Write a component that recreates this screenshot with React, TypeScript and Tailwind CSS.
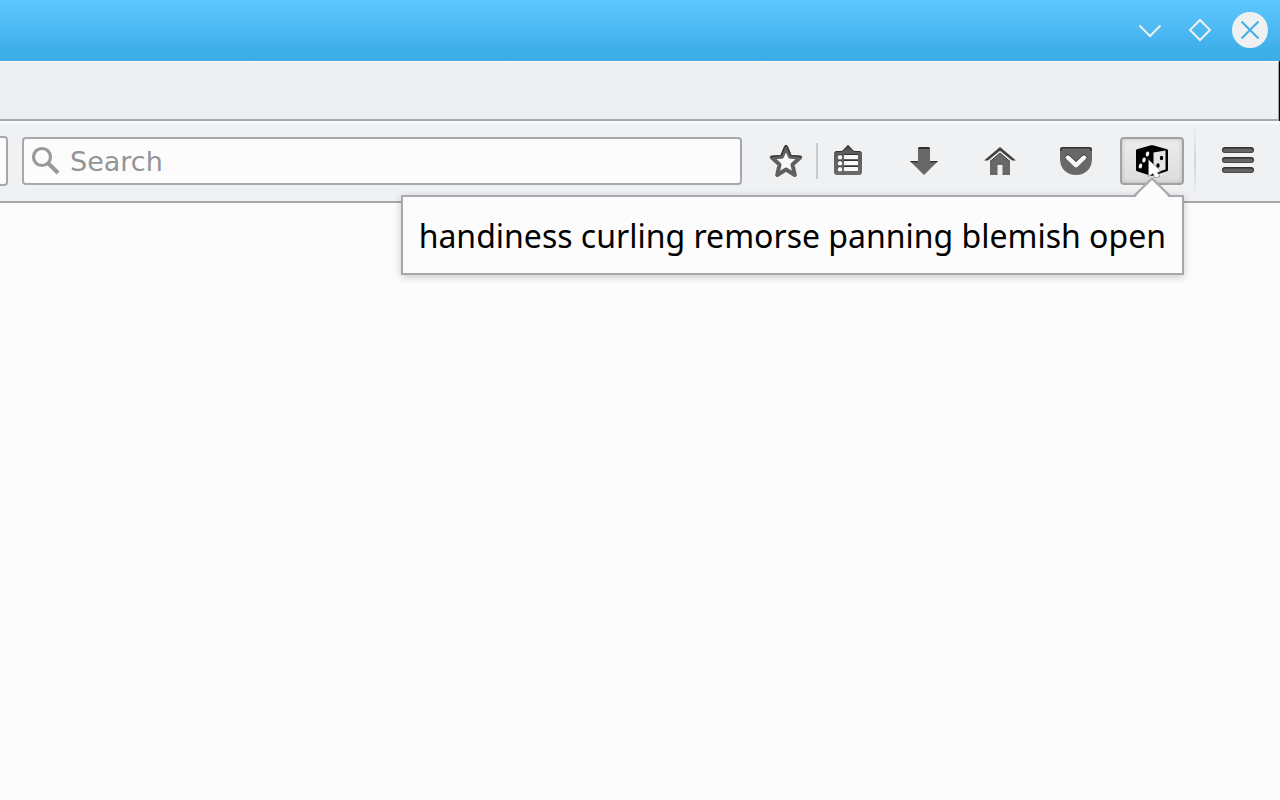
import type { ReactNode } from "react";

function IconButton({ label, className, children }: { label: string; className: string; children: ReactNode }) {
  return (
    <button type="button" aria-label={label} className={`flex h-12 shrink-0 items-center justify-center ${className}`}>
      {children}
    </button>
  );
}

function IconDefs() {
  return (
    <svg width="0" height="0" className="absolute" aria-hidden="true">
      <defs>
        <linearGradient id="metal" x1="0" y1="0" x2="0" y2="1">
          <stop offset="0" stopColor="#303030" />
          <stop offset="0.18" stopColor="#5c5c5c" />
          <stop offset="1" stopColor="#6a6a6a" />
        </linearGradient>
      </defs>
    </svg>
  );
}

function TitleBar() {
  return (
    <header className="flex h-[61px] items-center justify-end gap-[14px] bg-linear-to-b from-[#5ec7ff] to-[#3daee9] to-85% pr-3 pb-px">
      <IconButton label="Minimize" className="w-9">
        <svg width="36" height="36" viewBox="0 0 36 36" fill="none" stroke="#eff0f1" strokeWidth="2">
          <path d="M7.500 13.500 18 24 28.500 13.500" />
        </svg>
      </IconButton>
      <IconButton label="Maximize" className="w-9">
        <svg width="36" height="36" viewBox="0 0 36 36" fill="none" stroke="#eff0f1" strokeWidth="2">
          <path d="M18 8 28 18 18 28 8 18Z" />
        </svg>
      </IconButton>
      <IconButton label="Close" className="w-9">
        <svg width="36" height="36" viewBox="0 0 36 36" fill="none" stroke="#3daee9" strokeWidth="2">
          <circle cx="18" cy="18" r="18" fill="#eff0f1" stroke="none" />
          <path d="M9.500 9.500 26.500 26.500M26.500 9.500 9.500 26.500" />
        </svg>
      </IconButton>
    </header>
  );
}

function Tooltip() {
  return (
    <div
      role="tooltip"
      className="absolute top-[58px] right-0 h-20 border-2 border-[#a5a8ac] bg-[#fcfcfc] px-4 pt-px shadow-[0_2px_8px_rgba(0,0,0,0.2)]"
    >
      <svg width="40" height="22" viewBox="0 0 40 22" className="absolute -top-[21px] right-[10px]">
        <path d="M2.500 22 20 3.500 37.500 22Z" fill="#fcfcfc" />
        <path d="M1.500 20.500 20 2.500 38.500 20.500" fill="none" stroke="#a5a8ac" strokeWidth="2" />
      </svg>
      <p className="font-['Noto_Sans',sans-serif] text-[32px] leading-[76px] whitespace-nowrap text-black">
        handiness curling remorse panning blemish open
      </p>
    </div>
  );
}

function DiceIcon() {
  return (
    <svg width="32" height="34" viewBox="0 0 32 34">
      <path d="M0 6.500Q0 5.500 1 5.200L15 1.300Q16 1 17 1.300L31 5.200Q32 5.500 32 6.500V26Q32 27 31 27.300L17 31.700Q16 32 15 31.700L1 27.300Q0 27 0 26Z" fill="#000" />
      <path d="M17.500 8.500 29.500 6.500V25.500L17.500 29Z" fill="#e6e6e6" />
      <g fill="#f4f4f4">
        <ellipse cx="11.500" cy="10" rx="1.700" ry="2.500" transform="rotate(15 11.500 10)" />
        <ellipse cx="8" cy="16" rx="1.700" ry="2.500" transform="rotate(15 8 16)" />
        <ellipse cx="4.500" cy="22" rx="1.700" ry="2.500" transform="rotate(15 4.500 22)" />
      </g>
      <ellipse cx="25.500" cy="14" rx="1.700" ry="2.300" />
      <ellipse cx="22" cy="21.500" rx="1.700" ry="2.300" />
      <path d="M12.500 15.500V32.500L17 29.500 19 34 24 32.500 21.500 28.500 25 27.500Z" fill="#fff" stroke="#666" strokeWidth="0.600" />
    </svg>
  );
}

function Toolbar() {
  return (
    <nav className="relative flex h-[82px] items-center border-b-2 border-[#a5a8ac] bg-linear-to-b from-[#f8f9fa] from-3% via-[#f0f1f3] via-4% to-[#f0f1f3]">
      <div className="h-[50px] w-2 shrink-0 rounded-r-[4px] border-2 border-l-0 border-[#a5a8ac] bg-[#fcfcfc]" />
      <label className="ml-[14px] flex h-12 min-w-0 flex-1 items-center rounded-[4px] border-2 border-[#a5a8ac] bg-[#fcfcfc]">
        <svg width="30" height="30" viewBox="0 0 30 30" className="ml-[6px] shrink-0" fill="none" stroke="#999" aria-hidden="true">
          <circle cx="12" cy="11" r="8.500" strokeWidth="3.200" />
          <path d="M18 17 28 27" strokeWidth="4" />
        </svg>
        <input
          type="text"
          aria-label="Search"
          placeholder="Search"
          className="ml-[10px] h-full min-w-0 flex-1 bg-transparent font-['DejaVu_Sans',sans-serif] text-[27px] text-black outline-none placeholder:text-[#929497]"
        />
      </label>
      <IconButton label="Bookmark this page" className="ml-[14px] w-[60px]">
        <svg width="34" height="34" viewBox="0 0 34 34">
          <path d="M17 3.300 21 12.800 31.200 13.500 23.500 20.500 25.800 31 17 25.500 8.200 31 10.500 20.500 2.800 13.500 13 12.800Z" fill="#fafafa" stroke="#606060" strokeWidth="4" strokeLinejoin="round" />
          <path d="M15.500 3 17 1.300 18.500 3 22 11.500 32.500 12.700M15.500 3 12 11.500 1.500 12.700" fill="none" stroke="#303030" strokeWidth="1.200" strokeLinejoin="round" />
        </svg>
      </IconButton>
      <div className="h-9 w-[2px] shrink-0 bg-[#c8c9cb]" />
      <IconButton label="Show bookmarks" className="mr-2 w-[60px]">
        <svg width="28" height="32" viewBox="0 0 28 32">
          <path d="M3 6H8L14 0 20 6H25Q28 6 28 9V27Q28 30 25 30H3Q0 30 0 27V9Q0 6 3 6Z" fill="url(#metal)" />
          <path d="M1 7.500Q1.500 6.500 3 6.500H8.200L14 0.700 19.800 6.500H25Q26.500 6.500 27 7.500" fill="none" stroke="#303030" />
          <g fill="#303030">
            <circle cx="6" cy="11.500" r="2.300" />
            <circle cx="6" cy="17.500" r="2.300" />
            <circle cx="6" cy="23.500" r="2.300" />
            <path d="M10 9H24V11H10ZM10 15H24V17H10ZM10 21H24V23H10Z" />
          </g>
          <g fill="#f8f8f8">
            <circle cx="6" cy="12.200" r="2.200" />
            <circle cx="6" cy="18.200" r="2.200" />
            <circle cx="6" cy="24.200" r="2.200" />
            <rect x="10" y="10" width="14" height="4" rx="0.500" />
            <rect x="10" y="16" width="14" height="4" rx="0.500" />
            <rect x="10" y="22" width="14" height="4" rx="0.500" />
          </g>
        </svg>
      </IconButton>
      <IconButton label="Downloads" className="w-[76px]">
        <svg width="28" height="28" viewBox="0 0 28 28">
          <path d="M10 0H18Q20 0 20 2V14H28L14 28 0 14H8V2Q8 0 10 0Z" fill="#686868" />
          <path d="M8 2Q8 0 10 0H18Q20 0 20 2H8ZM0 14H8V15.500H1.500ZM20 14H28L26.500 15.500H20Z" fill="#303030" />
        </svg>
      </IconButton>
      <IconButton label="Home" className="w-[76px]">
        <svg width="32" height="28" viewBox="0 0 32 28">
          <path d="M16 0 32 13.500H28L16 3.700 4 13.500H0Z" fill="#444" />
          <path d="M16 6 26 14.500V28H18.500V18H13.500V28H6V14.500Z" fill="#686868" />
          <path d="M6 14.500 16 6 26 14.500" fill="none" stroke="#3c3c3c" />
        </svg>
      </IconButton>
      <IconButton label="Save to Pocket" className="w-[76px]">
        <svg width="32" height="28" viewBox="0 0 32 28">
          <path d="M3 0H29Q32 0 32 3V12C32 22 25 28 16 28S0 22 0 12V3Q0 0 3 0Z" fill="#686868" />
          <path d="M0.700 4V3Q0.700 0.700 3 0.700H29Q31.300 0.700 31.300 3V4" fill="none" stroke="#303030" strokeWidth="1.400" />
          <path d="M8 9.500 16 17.200 24 9.500" fill="none" stroke="#333" strokeWidth="4.400" strokeLinecap="round" strokeLinejoin="round" />
          <path d="M8 10.500 16 18.200 24 10.500" fill="none" stroke="#fafafa" strokeWidth="4.400" strokeLinecap="round" strokeLinejoin="round" />
        </svg>
      </IconButton>
      <div className="relative mr-[10px] ml-[6px] shrink-0">
        <IconButton
          label="Generate phrase"
          className="w-16 rounded-[4px] border-2 border-[#a2a2a2] bg-linear-to-b from-[#ececec] to-[#dcdcdc] shadow-[inset_0_0_4px_rgba(0,0,0,0.18)]"
        >
          <DiceIcon />
        </IconButton>
        <Tooltip />
      </div>
      <div className="h-[74px] w-[2px] shrink-0 bg-linear-to-b from-transparent via-[#d3d4d6] to-transparent" />
      <IconButton label="Open menu" className="w-[84px] pb-[2px]">
        <svg width="32" height="26" viewBox="0 0 32 26" fill="#656565">
          <g fill="#303030">
            <rect width="32" height="6" rx="3" />
            <rect y="10" width="32" height="6" rx="3" />
            <rect y="20" width="32" height="6" rx="3" />
          </g>
          <rect x="1" y="1.500" width="30" height="4" rx="2" />
          <rect x="1" y="11.500" width="30" height="4" rx="2" />
          <rect x="1" y="21.500" width="30" height="4" rx="2" />
        </svg>
      </IconButton>
    </nav>
  );
}

export default function App() {
  return (
    <div className="min-h-screen overflow-x-hidden bg-[#fcfcfc]">
      <IconDefs />
      <TitleBar />
      <div className="flex h-[60px] bg-black">
        <div className="flex-1 border-t border-r border-b-2 border-t-[#fcfcfc] border-r-[#a5a8ac] border-b-[#a5a8ac] bg-[#eeeff1]" />
        <div className="w-px" />
      </div>
      <Toolbar />
      <main />
    </div>
  );
}
